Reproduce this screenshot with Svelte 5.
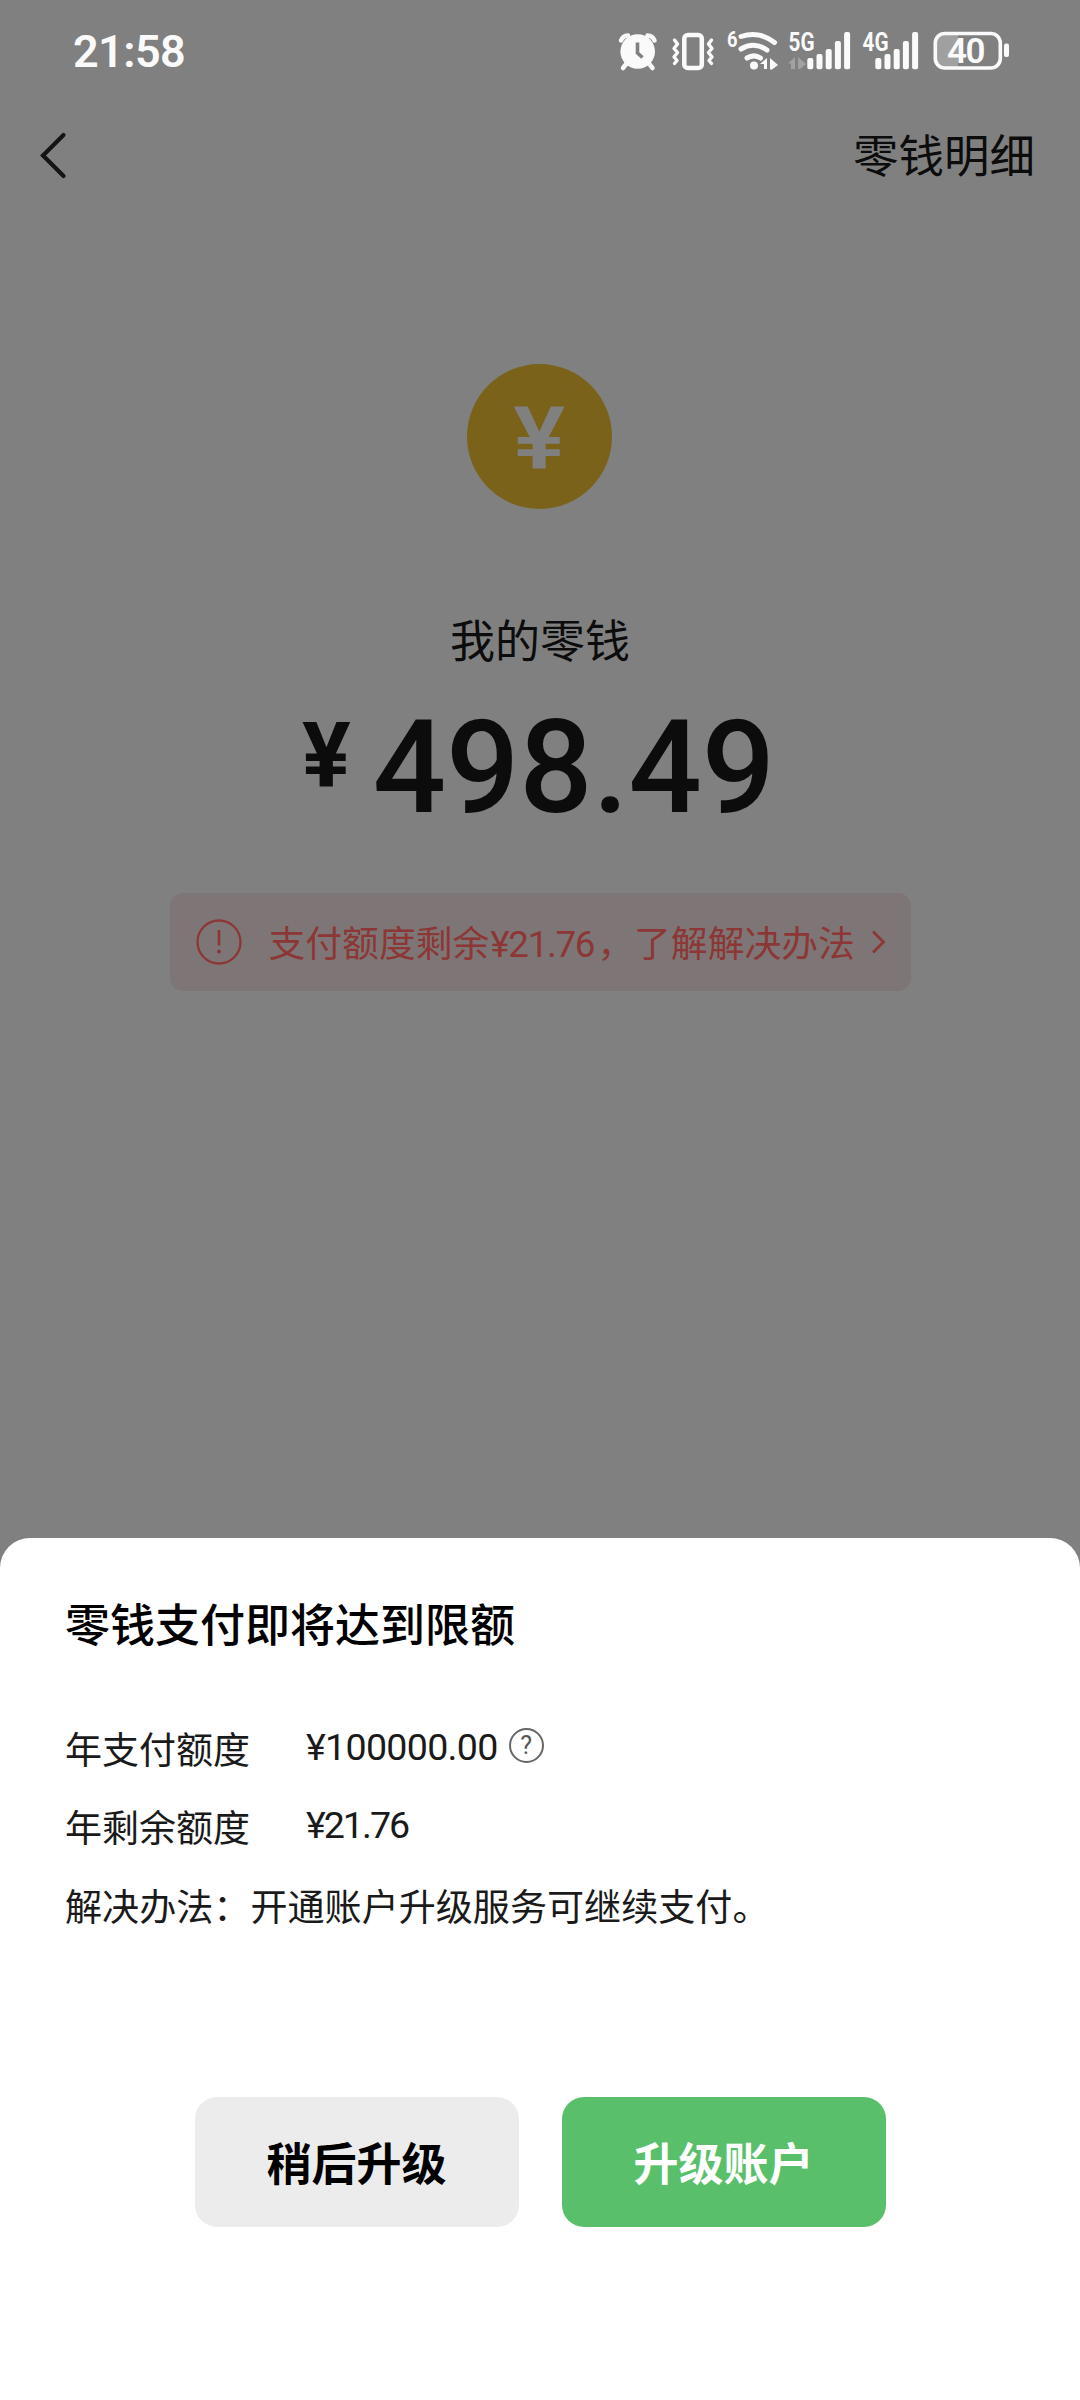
<script lang="ts">
    const bars = [58, 54, 49, 41, 32];
    const networks = [
        { name: "5G", x: 785, bars: 807.3, idle: true },
        { name: "4G", x: 859, bars: 875.3, idle: false },
    ];
    const limits = [
        { label: "年支付额度", value: "¥100000.00", help: true },
        { label: "年剩余额度", value: "¥21.76", help: false },
    ];
</script>

<div class="screen">
    <div class="status">
        <span class="time">21:58</span>
        <div class="status-icons">
            <svg width="55" height="60" viewBox="610 20 55 60">
                <path d="M621 40.500a8 8 0 0 1 7-5M654.500 40.500a8 8 0 0 0-7-5" class="line" stroke-width="4.500" />
                <path d="M627 63l-4 5M648.500 63l4 5" class="line" stroke-width="4.500" />
                <circle cx="637.700" cy="51.500" r="17.300" fill="#fafafa" />
                <path d="M637.500 42.500v10.500l5 4.500" fill="none" stroke="#808080" stroke-width="3.600" />
            </svg>
            <svg width="60" height="60" viewBox="665 20 60 60">
                <rect x="684.300" y="35" width="17.500" height="33" rx="3.500" class="line" stroke-width="4.500" />
                <path d="M674.500 40l3 4-3.500 4.500 3.500 4-3.500 4.500 3 3.500-2.500 3M711.500 40l-3 4 3.500 4.500-3.500 4 3.500 4.500-3 3.500 2.500 3" class="line" stroke-width="3.400" />
            </svg>
            <svg width="60" height="60" viewBox="725 20 60 60">
                <text x="727" y="46.500" font-size="22" textLength="10.500" lengthAdjust="spacingAndGlyphs">6</text>
                <path d="M741 36.500c12-4 24-1.500 33.500 6M741 49c9-5.500 18-4.500 26 1M747 58c5-3 9-3 13.500 0" class="line" stroke-width="5" />
                <circle cx="754" cy="65.500" r="4" fill="#fafafa" />
                <path d="M760 64l7-6v11h-3v-5zM770 58l8 7-6 4.500h-2z" fill="#fafafa" />
            </svg>
            {#each networks as net}
                <svg width="74" height="60" viewBox="{net.x} 20 74 60">
                    <text x={net.x + 3.5} y="50.500" font-size="26" textLength="26" lengthAdjust="spacingAndGlyphs">{net.name}</text>
                    {#if net.idle}
                        <path d="M788 63.500l7-6.500v12h-4v-5.500zM798 57l8 7-6 5h-2z" fill="#a2a2a2" />
                    {/if}
                    {#each bars as top, i}
                        <rect x={net.bars + i * 9.2} y={top} width="6" height={69.3 - top} rx="2" fill="#fafafa" />
                    {/each}
                </svg>
            {/each}
            <svg width="80" height="60" viewBox="933 20 80 60">
                <path d="M958 34v34h-14q-8 0-8-8V42q0-8 8-8z" fill="#a0a0a0" />
                <rect x="935.300" y="33.500" width="65" height="34.500" rx="9.500" class="line" stroke-width="3.600" />
                <rect x="1004" y="43.500" width="5" height="13.500" rx="2" fill="#fafafa" />
                <text class="charge" x="947" y="62.500" font-size="35" textLength="38.500">40</text>
            </svg>
        </div>
    </div>

    <div class="nav">
        <svg width="32" height="52" viewBox="0 0 32 52">
            <path d="M25.500 5L5 25.500 25.500 46" fill="none" stroke="#141414" stroke-width="4.200" stroke-linecap="round" />
        </svg>
        <span>零钱明细</span>
    </div>

    <div class="balance">
        <div class="coin"><span>¥</span></div>
        <div class="label">我的零钱</div>
        <div class="amount"><span class="yen">¥</span><span class="num">498.49</span></div>
        <div class="notice">
            <svg width="46" height="46" viewBox="0 0 46 46">
                <circle cx="23" cy="23" r="21.500" fill="none" stroke="#8c3735" stroke-width="2.300" />
                <path d="M23 11v15.500" stroke="#8c3735" stroke-width="2.600" />
                <circle cx="23" cy="32.500" r="2" fill="#8c3735" />
            </svg>
            <span class="notice-text">支付额度剩余<b>¥21.76</b>，了解解决办法</span>
            <svg class="arrow" width="16" height="26" viewBox="0 0 16 26">
                <path d="M2 2.500L12.500 13 2 23.500" fill="none" stroke="#8c3735" stroke-width="2.700" />
            </svg>
        </div>
    </div>

    <div class="sheet">
        <h2>零钱支付即将达到限额</h2>
        {#each limits as item}
            <div class="row">
                <span class="name">{item.label}</span>
                <span class="value" class:tight={!item.help}>{item.value}</span>
                {#if item.help}
                    <span class="help">?</span>
                {/if}
            </div>
        {/each}
        <p>解决办法：开通账户升级服务可继续支付。</p>
        <div class="buttons">
            <button>稍后升级</button>
            <button class="primary">升级账户</button>
        </div>
    </div>
</div>

<style>
    :global(body) {
        margin: 0;
        background: #808080;
    }

    .screen {
        width: 1080px;
        height: 2400px;
        display: flex;
        flex-direction: column;
        overflow: hidden;
        background: #808080;
        color: #0c0c0c;
        font-family: Roboto, "Noto Sans CJK SC", sans-serif;
    }

    .status {
        height: 100px;
        box-sizing: border-box;
        padding: 20px 67px 0 73px;
        display: flex;
        justify-content: space-between;
    }

    .time {
        color: #fafafa;
        font-size: 45px;
        font-weight: 600;
        line-height: 63px;
        letter-spacing: -0.6px;
    }

    .status-icons {
        display: flex;
    }

    .status-icons text {
        fill: #fafafa;
        font-weight: 700;
    }

    .status-icons .charge {
        font-weight: 600;
    }

    .line {
        fill: none;
        stroke: #fafafa;
        stroke-linecap: round;
        stroke-linejoin: round;
    }

    .nav {
        height: 112px;
        padding: 0 45px 0 38px;
        display: flex;
        align-items: center;
        justify-content: space-between;
        font-size: 45.5px;
    }

    .nav span {
        padding-bottom: 6px;
    }

    .balance {
        flex: 1;
        display: flex;
        flex-direction: column;
        align-items: center;
    }

    .coin {
        width: 145px;
        height: 145px;
        margin: 152px 1px 0 0;
        border-radius: 50%;
        background: #7a621b;
        color: #808080;
        font-size: 87px;
        font-weight: 600;
        line-height: 149px;
        text-align: center;
    }

    .coin span {
        display: inline-block;
        transform: scaleX(1.12);
    }

    .label {
        margin-top: 104px;
        font-size: 45px;
        line-height: 60px;
    }

    .amount {
        height: 110px;
        margin: 40px 3px 0 0;
        display: flex;
        gap: 22px;
        font-weight: 500;
    }

    .yen {
        font-size: 91px;
        font-weight: 700;
        line-height: 87px;
    }

    .num {
        font-size: 129px;
        line-height: 110px;
    }

    .notice {
        width: 741px;
        height: 98px;
        margin-top: 70px;
        padding: 0 24px 0 26px;
        box-sizing: border-box;
        display: flex;
        align-items: center;
        border-radius: 13px;
        background: #7e7676;
        color: #8c3735;
        font-size: 36.8px;
    }

    .notice-text {
        margin: 0 auto 0 27px;
        padding-bottom: 3px;
        white-space: nowrap;
    }

    .notice-text b {
        margin: 0 3px 0 1px;
        font-weight: 400;
        letter-spacing: -1.3px;
    }

    .sheet {
        height: 862px;
        box-sizing: border-box;
        padding: 59px 65px 0;
        border-radius: 30px 30px 0 0;
        background: #fff;
        color: #1a1a1a;
        font-size: 37px;
    }

    h2 {
        margin: 0 0 67px;
        color: #000;
        font-size: 45px;
        font-weight: 500;
        line-height: 60px;
    }

    .row {
        height: 78px;
        display: flex;
        align-items: flex-start;
        line-height: 54px;
    }

    .name {
        width: 241px;
        padding-top: 1px;
    }

    .value {
        margin-top: -4px;
        font-size: 37.6px;
        letter-spacing: -0.7px;
    }

    .value.tight {
        letter-spacing: -2px;
    }

    .help {
        width: 31px;
        height: 31px;
        margin: 4px 0 0 11px;
        border: 2px solid #666;
        border-radius: 50%;
        color: #555;
        font-size: 25px;
        line-height: 32px;
        text-align: center;
    }

    p {
        margin: 2px 0 0;
        font-size: 37.1px;
        line-height: 54px;
    }

    .buttons {
        margin-top: 161px;
        display: flex;
        justify-content: center;
        gap: 43px;
    }

    button {
        width: 324px;
        height: 130px;
        padding: 0 0 2px;
        border: none;
        border-radius: 22px;
        background: #ececec;
        color: #000;
        font-family: inherit;
        font-size: 45px;
        font-weight: 700;
    }

    button.primary {
        background: #5abf6b;
        color: #fff;
    }
</style>
